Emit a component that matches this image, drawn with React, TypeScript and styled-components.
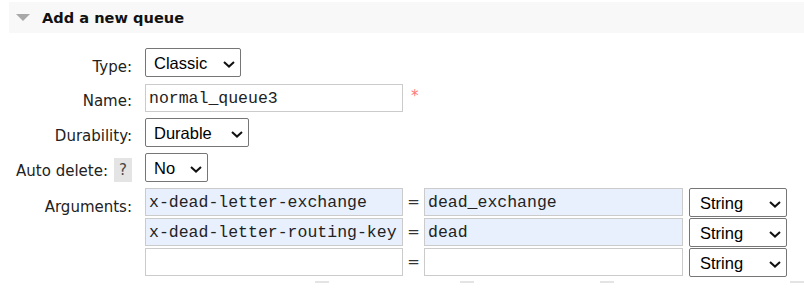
import React from "react";
import styled, { createGlobalStyle } from "styled-components";

const GlobalStyle = createGlobalStyle`
  body {
    margin: 0;
    background: #fff;
    color: #222;
    font-family: "DejaVu Sans", Verdana, sans-serif;
    overflow: hidden;
  }
  * {
    box-sizing: border-box;
  }
`;

const Page = styled.div`
  padding: 2px 0 0 9px;
`;

const Header = styled.div`
  display: flex;
  align-items: center;
  height: 31px;
  padding-left: 7px;
  background: #f8f8f8;
`;

const Title = styled.h2`
  margin: 0 0 0 12px;
  font-size: 14.6px;
  font-weight: bold;
  line-height: 31px;
  color: #111;
`;

const Form = styled.div`
  display: flex;
  flex-direction: column;
  margin-top: 15px;
`;

const Field = styled.div<{ $h: number }>`
  display: flex;
  height: ${({ $h }) => $h}px;
`;

const Label = styled.div<{ $top: number }>`
  display: flex;
  justify-content: flex-end;
  align-items: flex-start;
  gap: 6px;
  width: 123px;
  flex-shrink: 0;
  padding-top: ${({ $top }) => $top}px;
  font-size: 15px;
  line-height: 20px;
  white-space: nowrap;
`;

const HelpBox = styled.span`
  display: inline-block;
  width: 18px;
  height: 24px;
  margin-top: -3px;
  background: #e4e4e4;
  color: #444;
  font-size: 15px;
  line-height: 24px;
  text-align: center;
  flex-shrink: 0;
`;

const Control = styled.div`
  display: flex;
  align-items: flex-start;
  margin-left: 13px;
`;

const SelectWrap = styled.div<{ $w: number }>`
  position: relative;
  width: ${({ $w }) => $w}px;
  height: 29px;
  flex-shrink: 0;
`;

const Select = styled.select<{ $pad?: number }>`
  appearance: none;
  width: 100%;
  height: 100%;
  margin: 0;
  padding: 0 0 0 ${({ $pad }) => $pad ?? 8}px;
  border: 1px solid #767676;
  border-radius: 2px;
  background: #fff;
  color: #000;
  font-family: "Liberation Sans", Arial, sans-serif;
  font-size: 16.5px;
  outline: none;
`;

const Chevron = styled.svg`
  position: absolute;
  right: 6px;
  top: 13px;
  pointer-events: none;
`;

const TextInput = styled.input<{ $w: number; $filled?: boolean }>`
  width: ${({ $w }) => $w}px;
  height: 28px;
  margin: 0;
  padding: 0 3px;
  border: 1px solid #cbcbcb;
  background: ${({ $filled }) => ($filled ? "#e8f0fe" : "#fff")};
  color: #222;
  font-family: "Liberation Mono", "Courier New", monospace;
  font-size: 16.5px;
  outline: none;
  flex-shrink: 0;
`;

const Required = styled.span`
  margin: 2px 0 0 8px;
  color: #f77;
  font-size: 15px;
  line-height: 20px;
`;

const ArgList = styled.div`
  display: flex;
  flex-direction: column;
  margin-left: 13px;
`;

const ArgLine = styled.div`
  display: flex;
  align-items: flex-start;
  height: 30px;
`;

const Equals = styled.span`
  width: 21px;
  text-align: center;
  font-size: 15px;
  line-height: 28px;
  color: #333;
`;

const TypeSlot = styled.div`
  margin-left: 6px;
`;

const HintRow = styled.div`
  display: flex;
  height: 9px;
`;

const HintTag = styled.span<{ $lead: number }>`
  width: 18px;
  height: 2px;
  margin-left: ${({ $lead }) => $lead}px;
  background: #e4e4e4;
`;

function Dropdown({
  width,
  value,
  options,
  pad,
}: {
  width: number;
  value: string;
  options: string[];
  pad?: number;
}) {
  return (
    <SelectWrap $w={width}>
      <Select defaultValue={value} $pad={pad}>
        {options.map((o) => (
          <option key={o}>{o}</option>
        ))}
      </Select>
      <Chevron width="12" height="7" viewBox="0 0 12 7">
        <path d="M1 1 L6 5.6 L11 1" fill="none" stroke="#111" strokeWidth="2" />
      </Chevron>
    </SelectWrap>
  );
}

const args = [
  { key: "x-dead-letter-exchange", value: "dead_exchange" },
  { key: "x-dead-letter-routing-key", value: "dead" },
  { key: "", value: "" },
];

const argTypes = ["String", "Number", "Boolean", "List"];

export default function App() {
  return (
    <Page>
      <GlobalStyle />
      <Header>
        <svg width="14" height="7" viewBox="0 0 14 7">
          <polygon points="0,0 14,0 7,7" fill="#a8a8a8" />
        </svg>
        <Title>Add a new queue</Title>
      </Header>
      <Form>
        <Field $h={36}>
          <Label $top={9}>Type:</Label>
          <Control>
            <Dropdown width={96} value="Classic" options={["Classic", "Quorum", "Stream"]} />
          </Control>
        </Field>
        <Field $h={34}>
          <Label $top={7}>Name:</Label>
          <Control>
            <TextInput $w={258} defaultValue="normal_queue3" />
            <Required>*</Required>
          </Control>
        </Field>
        <Field $h={35}>
          <Label $top={8}>Durability:</Label>
          <Control>
            <Dropdown width={104} value="Durable" options={["Durable", "Transient"]} />
          </Control>
        </Field>
        <Field $h={35}>
          <Label $top={8}>
            Auto delete:<HelpBox>?</HelpBox>
          </Label>
          <Control>
            <Dropdown width={63} value="No" options={["No", "Yes"]} />
          </Control>
        </Field>
        <Field $h={93}>
          <Label $top={9}>Arguments:</Label>
          <ArgList>
            {args.map((a, i) => (
              <ArgLine key={i}>
                <TextInput $w={258} $filled={!!a.key} defaultValue={a.key} />
                <Equals>=</Equals>
                <TextInput $w={259} $filled={!!a.value} defaultValue={a.value} />
                <TypeSlot>
                  <Dropdown width={98} value="String" options={argTypes} pad={10} />
                </TypeSlot>
              </ArgLine>
            ))}
          </ArgList>
        </Field>
        <HintRow>
          <HintTag $lead={306} />
          <HintTag $lead={131} />
          <HintTag $lead={126} />
          <HintTag $lead={176} />
        </HintRow>
      </Form>
    </Page>
  );
}
